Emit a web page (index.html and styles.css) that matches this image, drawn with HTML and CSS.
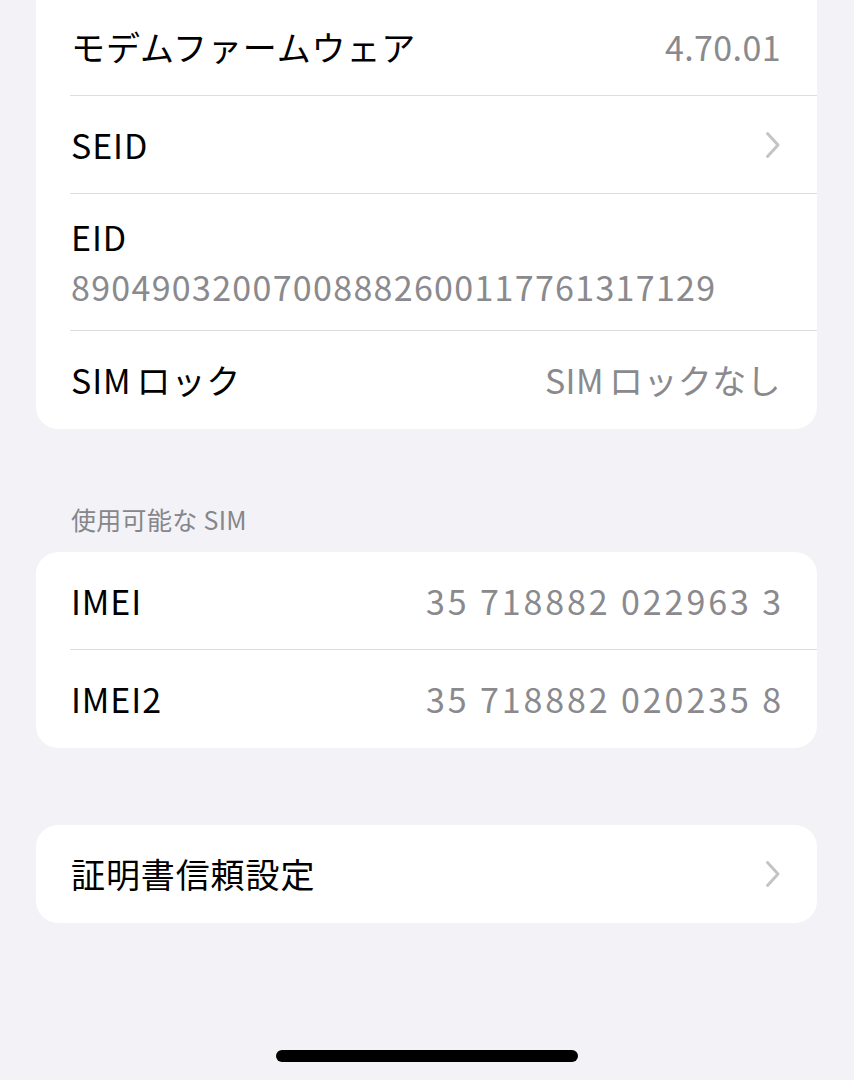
FILE: index.html
```html
<!DOCTYPE html>
<html lang="ja">
<head>
<meta charset="utf-8">
<title>情報</title>
<link rel="stylesheet" href="styles.css">
</head>
<body>
<div class="page">
  <section class="card card-top">
    <div class="row">
      <span class="label">モデムファームウェア</span>
      <span class="value">4.70.01</span>
    </div>
    <div class="row">
      <span class="label">SEID</span>
      <svg class="chevron" viewBox="0 0 16 28" width="16" height="28"><path d="M2.5 2.5 L13 14 L2.5 25.5" fill="none" stroke="#c4c4c7" stroke-width="3" stroke-linecap="round" stroke-linejoin="round"/></svg>
    </div>
    <div class="row row-stack">
      <span class="label">EID</span>
      <span class="value eid">89049032007008882600117761317129</span>
    </div>
    <div class="row last">
      <span class="label"><span class="latin">SIM</span>ロック</span>
      <span class="value"><span class="latin">SIM</span>ロックなし</span>
    </div>
  </section>

  <h2 class="section-header">使用可能な<span class="latin-sm">SIM</span></h2>
  <section class="card">
    <div class="row">
      <span class="label">IMEI</span>
      <span class="value num">35 718882 022963 3</span>
    </div>
    <div class="row last">
      <span class="label">IMEI2</span>
      <span class="value num">35 718882 020235 8</span>
    </div>
  </section>

  <section class="card card-cert">
    <div class="row last">
      <span class="label">証明書信頼設定</span>
      <svg class="chevron" viewBox="0 0 16 28" width="16" height="28"><path d="M2.5 2.5 L13 14 L2.5 25.5" fill="none" stroke="#c4c4c7" stroke-width="3" stroke-linecap="round" stroke-linejoin="round"/></svg>
    </div>
  </section>

  <div class="home-bar-wrap"><div class="home-bar"></div></div>
</div>
</body>
</html>
```

FILE: styles.css
```css
html, body {
  margin: 0;
  padding: 0;
  background: #f2f2f7;
}
body {
  font-family: "Noto Sans CJK JP", "Noto Sans", sans-serif;
  color: #000;
  height: 1080px;
  overflow: hidden;
}
.page {
  padding: 0 37px 0 36px;
  display: flex;
  flex-direction: column;
}
.card {
  background: #fff;
  border-radius: 22px;
  overflow: hidden;
}
.card-top {
  margin-top: -32px;
  padding-top: 30px;
}
.row {
  display: flex;
  align-items: center;
  justify-content: space-between;
  height: 97px;
  margin-left: 34px;
  padding-left: 1px;
  padding-right: 36px;
  border-bottom: 1px solid #dedee2;
}
.row.last {
  border-bottom: none;
  height: 98px;
}
.row-stack {
  flex-direction: column;
  align-items: flex-start;
  justify-content: flex-start;
  height: 137px;
  padding-top: 20px;
  box-sizing: border-box;
}
.label {
  font-size: 34px;
  line-height: 46px;
  letter-spacing: 0.9px;
}
.value {
  font-size: 34px;
  line-height: 46px;
  color: #8a8a8e;
  letter-spacing: 0.4px;
}
.value.num {
  letter-spacing: 2.9px;
  margin-right: -3px;
}
.eid {
  margin-top: 4px;
  letter-spacing: 1.3px;
}
.latin {
  margin-right: 5px;
}
.chevron {
  display: block;
}
.section-header {
  margin: 73px 0 16px 35px;
  font-size: 25px;
  line-height: 34px;
  height: 34px;
  font-weight: normal;
  color: #86868b;
  letter-spacing: 0.3px;
}
.latin-sm {
  margin-left: 6px;
}
.card-cert {
  margin-top: 77px;
}
.home-bar-wrap {
  display: flex;
  justify-content: center;
  margin-top: 127px;
  padding-left: 1px;
}
.home-bar {
  width: 302px;
  height: 12px;
  border-radius: 6px;
  background: #000;
}
```
